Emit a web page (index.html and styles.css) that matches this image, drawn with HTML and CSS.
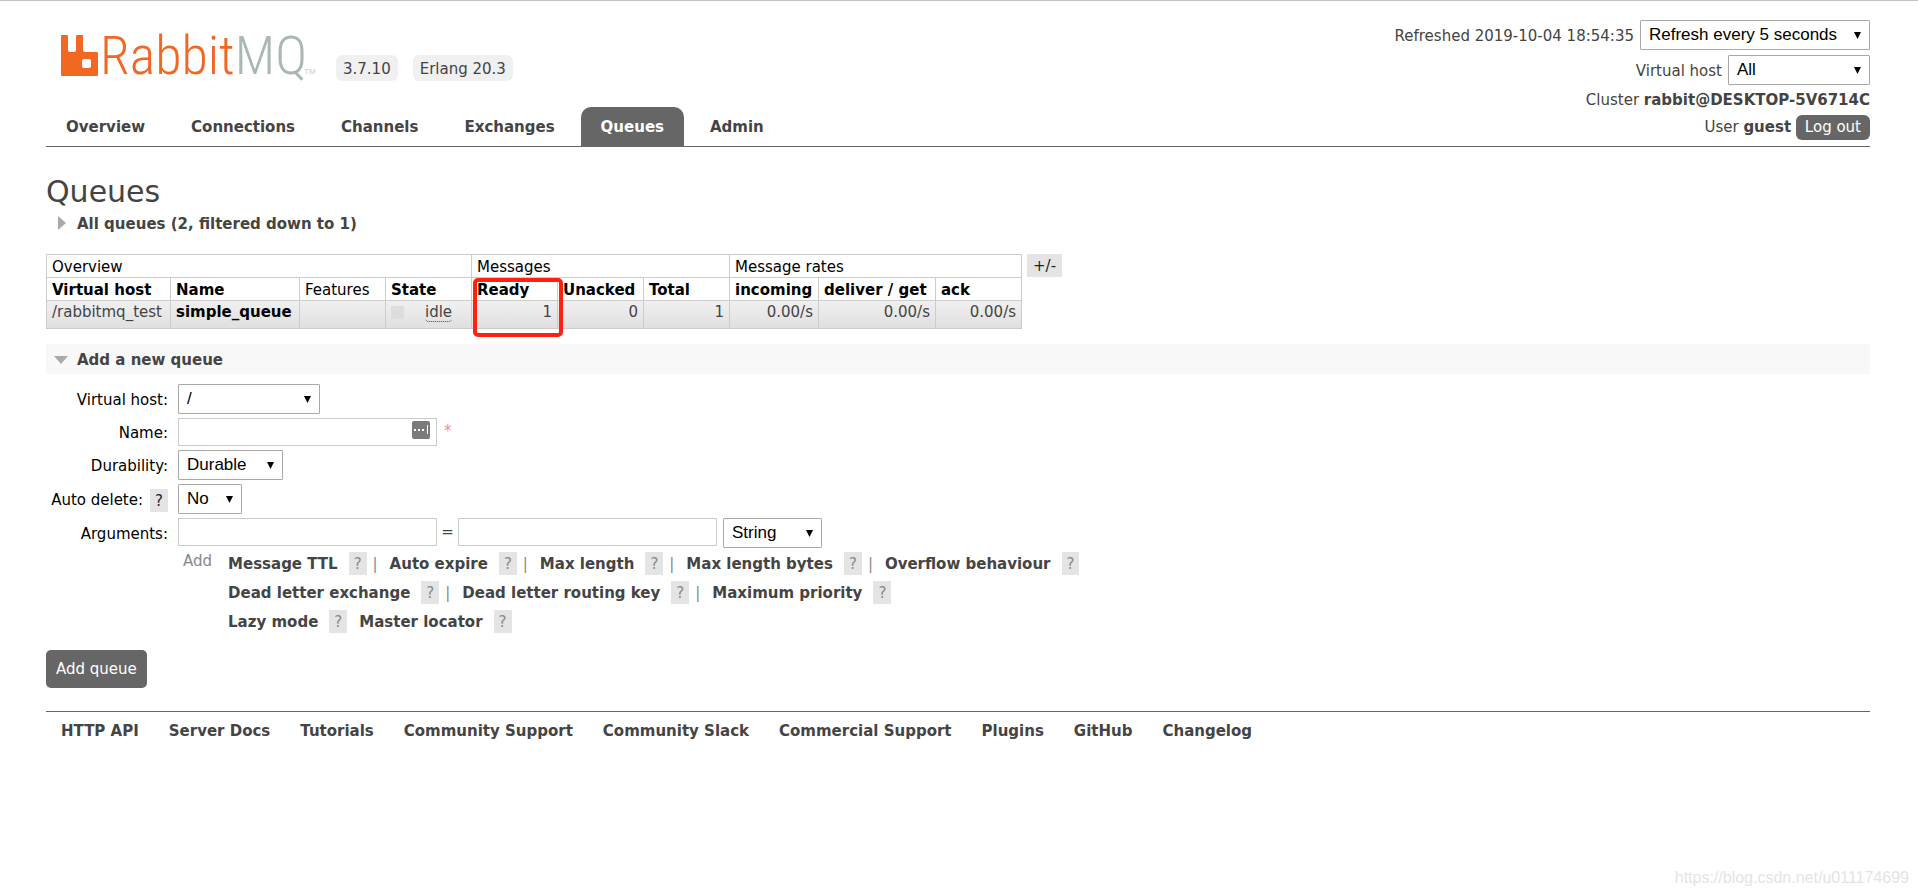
FILE: index.html
```html
<!DOCTYPE html>
<html lang="en">
<head>
<meta charset="utf-8">
<title>RabbitMQ Management</title>
<link rel="stylesheet" href="styles.css">
</head>
<body>
<header class="header">
  <div class="brand">
    <a class="logo" href="#" aria-label="RabbitMQ">
      <svg width="256" height="48" viewBox="0 0 256 48">
        <path fill="#f26722" d="M1 3q0-1 1-1h5q1 0 1 1v14q0 2 2 2h4q2 0 2-2V3q0-1 1-1h5q1 0 1 1v14q0 2 2 2h12q1 0 1 1v22q0 1-1 1H2q-1 0-1-1zM24 26q-2 0-2 2v5q0 2 2 2h5q2 0 2-2v-5q0-2-2-2z"/>
        <text class="logo-text" x="40" y="41"><tspan class="logo-rabbit">Rabbit</tspan><tspan class="logo-mq">MQ</tspan></text>
        <text class="logo-tm" x="244" y="41">TM</text>
      </svg>
    </a>
    <span class="version">3.7.10</span>
    <span class="version">Erlang 20.3</span>
  </div>
  <div class="status">
    <div class="status-row">
      <label for="refresh">Refreshed 2019-10-04 18:54:35</label>
      <span class="select select-refresh"><select id="refresh"><option>Refresh every 5 seconds</option></select></span>
    </div>
    <div class="status-row">
      <label for="show-vhost">Virtual host</label>
      <span class="select select-vhost"><select id="show-vhost"><option>All</option></select></span>
    </div>
    <div class="status-line">Cluster <b>rabbit@DESKTOP-5V6714C</b></div>
    <div class="status-line">User <b>guest</b> <button class="logout" type="button">Log out</button></div>
  </div>
  <nav class="tabs">
    <a href="#">Overview</a>
    <a href="#">Connections</a>
    <a href="#">Channels</a>
    <a href="#">Exchanges</a>
    <a href="#" class="selected">Queues</a>
    <a href="#">Admin</a>
  </nav>
</header>

<main>
  <h1>Queues</h1>
  <h2 class="section">
    <svg width="16" height="16" viewBox="0 0 16 16"><path fill="#aaa" d="M4 0l8 7-8 7z"/></svg>
    All queues (2, filtered down to 1)
  </h2>

  <div class="queues">
    <table class="list">
      <colgroup>
        <col class="c-vhost"><col class="c-name"><col class="c-std"><col class="c-std">
        <col class="c-std"><col class="c-std"><col class="c-std">
        <col class="c-in"><col class="c-get"><col class="c-std">
      </colgroup>
      <thead>
        <tr><th colspan="4">Overview</th><th colspan="3">Messages</th><th colspan="3">Message rates</th></tr>
        <tr class="columns">
          <th><b>Virtual host</b></th><th><b>Name</b></th><th>Features</th><th><b>State</b></th>
          <th class="marked"><b>Ready</b><span class="marker"></span></th><th><b>Unacked</b></th><th><b>Total</b></th>
          <th><b>incoming</b></th><th><b>deliver / get</b></th><th><b>ack</b></th>
        </tr>
      </thead>
      <tbody>
        <tr>
          <td>/rabbitmq_test</td>
          <td><a href="#">simple_queue</a></td>
          <td></td>
          <td><div class="state"><span class="state-box"></span><abbr>idle</abbr></div></td>
          <td class="num">1</td><td class="num">0</td><td class="num">1</td>
          <td class="num">0.00/s</td><td class="num">0.00/s</td><td class="num">0.00/s</td>
        </tr>
      </tbody>
    </table>
    <button class="help plus-minus" type="button">+/-</button>
  </div>

  <h2 class="section section-open">
    <svg width="16" height="16" viewBox="0 0 16 16"><path fill="#aaa" d="M0 4h14l-7 8z"/></svg>
    Add a new queue
  </h2>

  <form class="add-form">
    <div class="fields">
      <label for="vhost">Virtual host:</label>
      <div class="field"><span class="select select-vhost"><select id="vhost"><option>/</option></select></span></div>

      <label for="name">Name:</label>
      <div class="field">
        <span class="name-box">
          <input id="name" type="text">
          <svg class="name-icon" width="18" height="18" viewBox="0 0 18 18"><rect width="18" height="18" rx="2" fill="#7b7b7b"/><path fill="#fff" d="M2 8h2v2H2zM6 8h2v2H6zM10 8h2v2h-2zM15 4h1v9h-1z"/></svg>
        </span>
        <span class="mand">*</span>
      </div>

      <label for="durable">Durability:</label>
      <div class="field"><span class="select select-durable"><select id="durable"><option>Durable</option></select></span></div>

      <span class="label"><label for="auto-delete">Auto delete:</label> <button class="help" type="button">?</button></span>
      <div class="field"><span class="select select-no"><select id="auto-delete"><option>No</option></select></span></div>

      <label for="arg-key">Arguments:</label>
      <div class="field">
        <input id="arg-key" type="text">
        <span class="equals">=</span>
        <input type="text" aria-label="Argument value">
        <span class="select select-type"><select aria-label="Argument type"><option>String</option></select></span>
      </div>

      <div class="shortcuts">
        <span class="add-word">Add</span>
        <div class="shortcut-rows">
          <div class="shortcut-row">
            <a href="#">Message TTL</a><button class="help" type="button">?</button><i>|</i>
            <a href="#">Auto expire</a><button class="help" type="button">?</button><i>|</i>
            <a href="#">Max length</a><button class="help" type="button">?</button><i>|</i>
            <a href="#">Max length bytes</a><button class="help" type="button">?</button><i>|</i>
            <a href="#">Overflow behaviour</a><button class="help" type="button">?</button>
          </div>
          <div class="shortcut-row">
            <a href="#">Dead letter exchange</a><button class="help" type="button">?</button><i>|</i>
            <a href="#">Dead letter routing key</a><button class="help" type="button">?</button><i>|</i>
            <a href="#">Maximum priority</a><button class="help" type="button">?</button>
          </div>
          <div class="shortcut-row">
            <a href="#">Lazy mode</a><button class="help" type="button">?</button>
            <a class="next" href="#">Master locator</a><button class="help" type="button">?</button>
          </div>
        </div>
      </div>
    </div>
    <button class="submit" type="button">Add queue</button>
  </form>
</main>

<footer class="footer">
  <a href="#">HTTP API</a>
  <a href="#">Server Docs</a>
  <a href="#">Tutorials</a>
  <a href="#">Community Support</a>
  <a href="#">Community Slack</a>
  <a href="#">Commercial Support</a>
  <a href="#">Plugins</a>
  <a href="#">GitHub</a>
  <a href="#">Changelog</a>
</footer>
<div class="watermark">https://blog.csdn.net/u011174699</div>
</body>
</html>
```
FILE: styles.css
```css
* { box-sizing: border-box; }
html { min-height: 100%; }
body {
  margin: 0;
  padding: 0 48px 0 46px;
  border-top: 1px solid #c4c4c4;
  background: #fff;
  color: #444;
  font: 15px/23px Verdana, "DejaVu Sans", sans-serif;
}
a { color: #444; font-weight: bold; text-decoration: none; }
button { margin: 0; border: 0; font: inherit; }

.header {
  display: grid;
  grid-template-columns: 1fr auto;
  grid-template-rows: auto 1fr;
  border-bottom: 1px solid #666;
}
.brand {
  display: flex;
  align-items: flex-end;
  gap: 15px;
  height: 80px;
  padding-left: 14px;
}
.logo { height: 48px; margin-right: 5px; }
.logo svg { display: block; overflow: visible; }
.logo-text { font: 300 54px "Roboto Condensed", "Open Sans Condensed", "Liberation Sans Narrow", sans-serif; }
.logo-rabbit { fill: #f26722; }
.logo-mq { fill: #a9b8b1; }
.logo-tm { fill: #ccc; font: 8px "Liberation Sans", sans-serif; }
.version { padding: 3px 7px 0; border-radius: 6px; background: #f0f0f0; }

.status {
  grid-row: 1 / 3;
  grid-column: 2;
  display: flex;
  flex-direction: column;
  align-items: flex-end;
  padding-top: 19px;
}
.status-row { display: flex; align-items: center; gap: 6px; height: 30px; margin-bottom: 5px; }
.status-row label { padding-top: 2px; }
.status-row + .status-line { margin-top: -3px; }
.status-line { height: 27px; line-height: 27px; }
.logout {
  height: 25px;
  padding: 0 9px;
  border-radius: 6px;
  background: #666;
  color: #fff;
  line-height: 25px;
}
.tabs { display: flex; gap: 6px; grid-column: 1; padding-top: 26px; }
.tabs a { padding: 9px 20px 7px; border-radius: 10px 10px 0 0; }
.tabs .selected { background: #666; color: #fff; }

.select { position: relative; display: inline-flex; }
.select::after {
  content: "";
  position: absolute;
  right: 9px;
  top: 12px;
  width: 7px;
  height: 7px;
  background: #000;
  clip-path: polygon(0 0, 100% 0, 50% 100%);
  pointer-events: none;
}
select {
  width: 100%;
  height: 30px;
  padding: 0 8px 2px;
  appearance: none;
  border: 1px solid #a9a9a9;
  border-radius: 1px;
  background: #fff;
  color: #000;
  font: 17px "Liberation Sans", Arial, sans-serif;
}
.select-refresh { width: 230px; }
.select-vhost { width: 142px; }
.select-durable { width: 105px; }
.select-no { width: 64px; }
.select-type { width: 99px; margin-left: 6px; }
input {
  width: 259px;
  height: 28px;
  border: 1px solid #ccc;
  background: #fff;
  font: 15px "DejaVu Sans", sans-serif;
}

h1 { margin: 26px 0 0; font-size: 30px; line-height: 38px; font-weight: normal; }
.section {
  display: flex;
  align-items: center;
  gap: 7px;
  margin: 0;
  padding: 1px 8px 0;
  font-size: 15px;
  line-height: 24px;
}
.section-open { padding: 4px 8px 2px; background: #f8f8f8; }

.queues { display: flex; align-items: flex-start; gap: 5px; margin: 18px 0 15px; }
.list { width: 976px; table-layout: fixed; border-collapse: collapse; }
.list th, .list td {
  padding: 0 5px;
  border: 1px solid #ccc;
  text-align: left;
  white-space: nowrap;
}
.list th { height: 23px; padding-top: 2px; line-height: 20px; color: #000; font-weight: normal; }
.list tbody tr { background: linear-gradient(#f0f0f0, #dfdfdf); }
.list td { height: 28px; padding-bottom: 4px; line-height: 23px; }
.list td a { color: #000; }
.list .num { text-align: right; }
.c-vhost { width: 124px; }
.c-name { width: 129px; }
.c-std { width: 86px; }
.c-in { width: 89px; }
.c-get { width: 117px; }
.state { display: flex; align-items: center; gap: 21px; }
.state-box { width: 13px; height: 13px; background: #ddd; }
abbr { border-bottom: 1px dotted #444; border-radius: 4px; line-height: 18px; }
.marked { position: relative; }
.marker {
  position: absolute;
  inset: 0 -6px -37px 1px;
  border: 4px solid #ff2010;
  border-radius: 5px;
}

.help { height: 23px; padding: 0 5px; background: #e4e4e4; color: #222; line-height: 24px; }
.plus-minus { padding: 0 6px; }

.fields {
  display: grid;
  grid-template-columns: 122px 1fr;
  gap: 4px 10px;
  align-items: center;
  padding-top: 10px;
  color: #000;
}
.fields > label, .label { padding-top: 2px; text-align: right; white-space: nowrap; }
.label { display: flex; justify-content: flex-end; align-items: center; gap: 7px; }
.field { display: flex; align-items: flex-start; }
.name-box { position: relative; display: flex; }
.name-icon { position: absolute; right: 7px; top: 3px; }
.mand { margin-left: 7px; color: #f88; line-height: 26px; }
.equals { width: 21px; text-align: center; color: #444; line-height: 28px; }
.shortcuts { grid-column: 2; display: flex; gap: 16px; padding-left: 5px; color: #888; }
.add-word { line-height: 19px; }
.shortcut-rows { display: flex; flex-direction: column; gap: 6px; }
.shortcut-row { display: flex; height: 23px; line-height: 24px; }
.shortcut-row .help { margin-left: 11px; color: #888; }
.shortcut-row i { width: 23px; padding-left: 6px; font-style: normal; }
.shortcut-row .next { margin-left: 12px; }
.submit {
  display: block;
  height: 38px;
  margin: 17px 0 23px;
  padding: 1px 10px 0;
  border-radius: 5px;
  background: #666;
  color: #fff;
}

.footer {
  display: flex;
  gap: 30px;
  padding: 8px 15px;
  border-top: 1px solid #666;
}
.watermark {
  position: absolute;
  right: 9px;
  bottom: 6px;
  color: #e4e4e4;
  font: 16px/24px "Liberation Sans", Arial, sans-serif;
}
```
